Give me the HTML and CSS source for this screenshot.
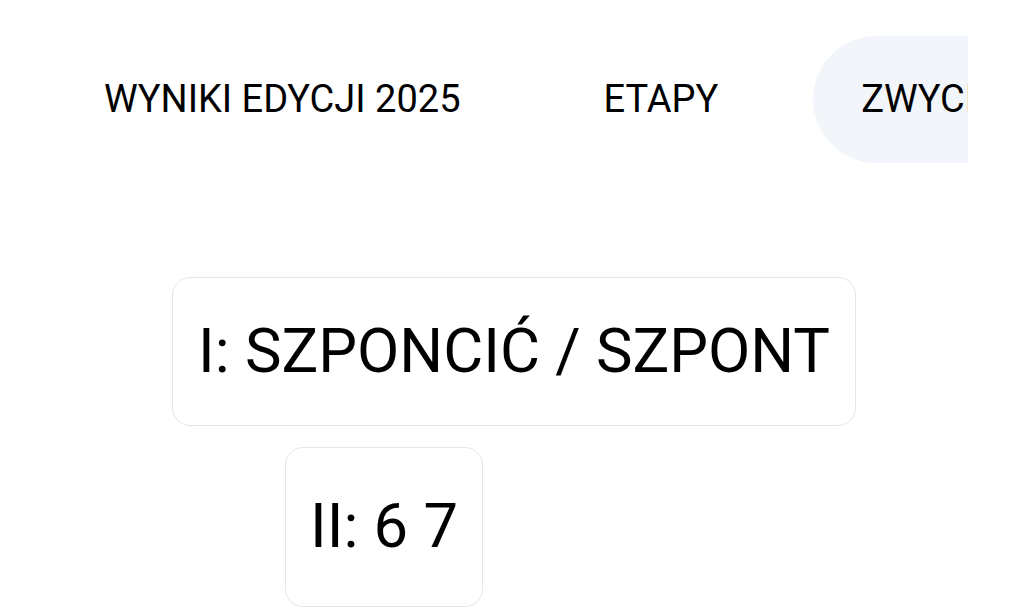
FILE: index.html
```html
<!DOCTYPE html>
<html lang="pl">
<head>
<meta charset="utf-8">
<title>Wyniki</title>
<link rel="stylesheet" href="styles.css">
</head>
<body>
<nav class="tabs">
  <a class="tab">WYNIKI EDYCJI 2025</a>
  <a class="tab">ETAPY</a>
  <a class="tab tab-active">ZWYCIĘZCY</a>
</nav>
<main class="results">
  <div class="card card-first">I: SZPONCIĆ / SZPONT</div>
  <div class="card card-second">II: 6 7</div>
</main>
</body>
</html>
```
FILE: styles.css
```css
html, body {
  margin: 0;
  padding: 0;
  background: #ffffff;
}
body {
  font-family: Roboto, "Noto Sans", sans-serif;
  color: #000000;
  width: 1024px;
  height: 616px;
  overflow: hidden;
}
.tabs {
  display: flex;
  gap: 47px;
  margin: 36px 56px 0 56px;
  overflow: hidden;
  white-space: nowrap;
}
.tab {
  flex-shrink: 0;
  display: block;
  font-size: 38px;
  line-height: 47px;
  padding: 40px 48px;
  border-radius: 64px;
  color: #000;
}
.tab-active {
  background: #f2f5fa;
}
.results {
  padding-left: 172px;
  margin-top: 114px;
  display: flex;
  flex-direction: column;
  align-items: flex-start;
  gap: 21px;
}
.card {
  box-sizing: border-box;
  border: 1px solid #e4e6ea;
  border-radius: 18px;
  font-size: 61.5px;
  line-height: 73px;
  padding: 37px 25px;
  white-space: nowrap;
}
.card-second {
  margin-left: 113px;
  padding: 42px 24px 43px 24px;
}
```
